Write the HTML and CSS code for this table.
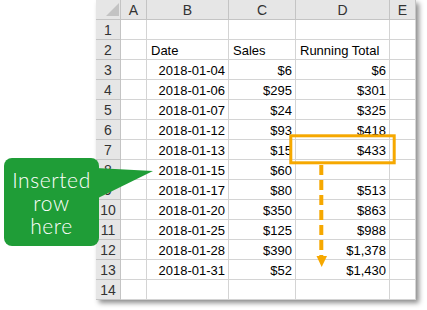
FILE: index.html
```html
<!DOCTYPE html>
<html lang="en">

<head>
    <meta charset="UTF-8">
    <meta name="viewport" content="width=device-width, initial-scale=1.0">
    <title>Running Total - Inserted Row</title>
    <link rel="stylesheet" href="styles.css">
</head>

<body>
    <div class="stage">
        <div class="sheet" id="sheet">
            <!-- Header and rows are added by the script below -->
        </div>

        <!-- Annotations drawn over the sheet -->
        <svg class="marks" width="427" height="310" viewBox="0 0 427 310">
            <polygon class="pointer" points="96,168 153,171 96,199" />
            <rect class="highlight" x="290.8" y="135.8" width="103.4" height="27" />
            <line class="trail" x1="321.3" y1="165" x2="321.3" y2="256" />
            <polygon class="arrow-head" points="316.5,256 327,256 321.7,267" />
        </svg>

        <div class="callout">Inserted<br>row<br>here</div>
    </div>

    <script>
        // Sheet data: date, sales, running total
        const rows = [
            ['', '', ''],
            ['Date', 'Sales', 'Running Total'],
            ['2018-01-04', '$6', '$6'],
            ['2018-01-06', '$295', '$301'],
            ['2018-01-07', '$24', '$325'],
            ['2018-01-12', '$93', '$418'],
            ['2018-01-13', '$15', '$433'],
            ['2018-01-15', '$60', ''],
            ['2018-01-17', '$80', '$513'],
            ['2018-01-20', '$350', '$863'],
            ['2018-01-25', '$125', '$988'],
            ['2018-01-28', '$390', '$1,378'],
            ['2018-01-31', '$52', '$1,430'],
            ['', '', '']
        ];

        const sheet = document.getElementById('sheet');
        let html = '<div class="cell hdr corner"></div>';

        ['A', 'B', 'C', 'D', 'E'].forEach(col => {
            html += `<div class="cell hdr">${col}</div>`;
        });

        rows.forEach((row, i) => {
            const label = i === 1 ? '' : ' num';
            html += `
                <div class="cell hdr row-num">${i + 1}</div>
                <div class="cell"></div>
                <div class="cell${label}">${row[0]}</div>
                <div class="cell${label}">${row[1]}</div>
                <div class="cell${label}">${row[2]}</div>
                <div class="cell"></div>
            `;
        });

        sheet.innerHTML = html;
    </script>
</body>

</html>
```

FILE: styles.css
```css
:root {
    --grid: #d4d4d4;
    --header-bg: #e6e6e6;
    --header-line: #c4c4c4;
    --green: #1f9d37;
    --orange: #f6a800;
}

* {
    margin: 0;
    padding: 0;
    box-sizing: border-box;
}

body {
    background: #ffffff;
    font-family: 'Liberation Sans', Arial, sans-serif;
    color: #000;
}

.stage {
    position: relative;
    width: 427px;
    height: 310px;
    overflow: hidden;
}

.sheet {
    margin-left: 96px;
    width: 320px;
    display: grid;
    grid-template-columns: 25px 26px 82px 67px 94px 26px;
    grid-auto-rows: 20px;
    background: #fff;
    box-shadow: 3px 3px 5px rgba(0, 0, 0, 0.45);
    font-size: 13px;
    line-height: 21px;
}

.cell {
    border-right: 1px solid var(--grid);
    border-bottom: 1px solid var(--grid);
    padding: 0 3px 0 4px;
    white-space: nowrap;
}

.num {
    text-align: right;
}

.hdr {
    background: var(--header-bg);
    border-color: var(--header-line);
    color: #333;
    text-align: center;
    padding: 0;
    font-size: 14px;
}

.corner {
    display: flex;
    justify-content: flex-end;
    align-items: flex-end;
    padding: 0 1px 3px 0;
}

.corner::after {
    content: '';
    width: 13px;
    height: 13px;
    background: #c3c3c3;
    clip-path: polygon(100% 0, 100% 100%, 0 100%);
}

/* Overlay marks */
.marks {
    position: absolute;
    top: 0;
    left: 0;
}

.pointer {
    fill: var(--green);
}

.highlight {
    fill: none;
    stroke: var(--orange);
    stroke-width: 3;
}

.trail {
    stroke: var(--orange);
    stroke-width: 4;
    stroke-dasharray: 10 5;
}

.arrow-head {
    fill: var(--orange);
}

.callout {
    position: absolute;
    left: 4px;
    top: 158px;
    width: 95px;
    height: 88px;
    display: flex;
    align-items: center;
    justify-content: center;
    background: var(--green);
    border-radius: 8px;
    color: #fff;
    font-family: Lato, 'Open Sans', sans-serif;
    font-weight: 300;
    font-size: 21px;
    line-height: 23px;
    letter-spacing: 0.6px;
    text-align: center;
}
```
